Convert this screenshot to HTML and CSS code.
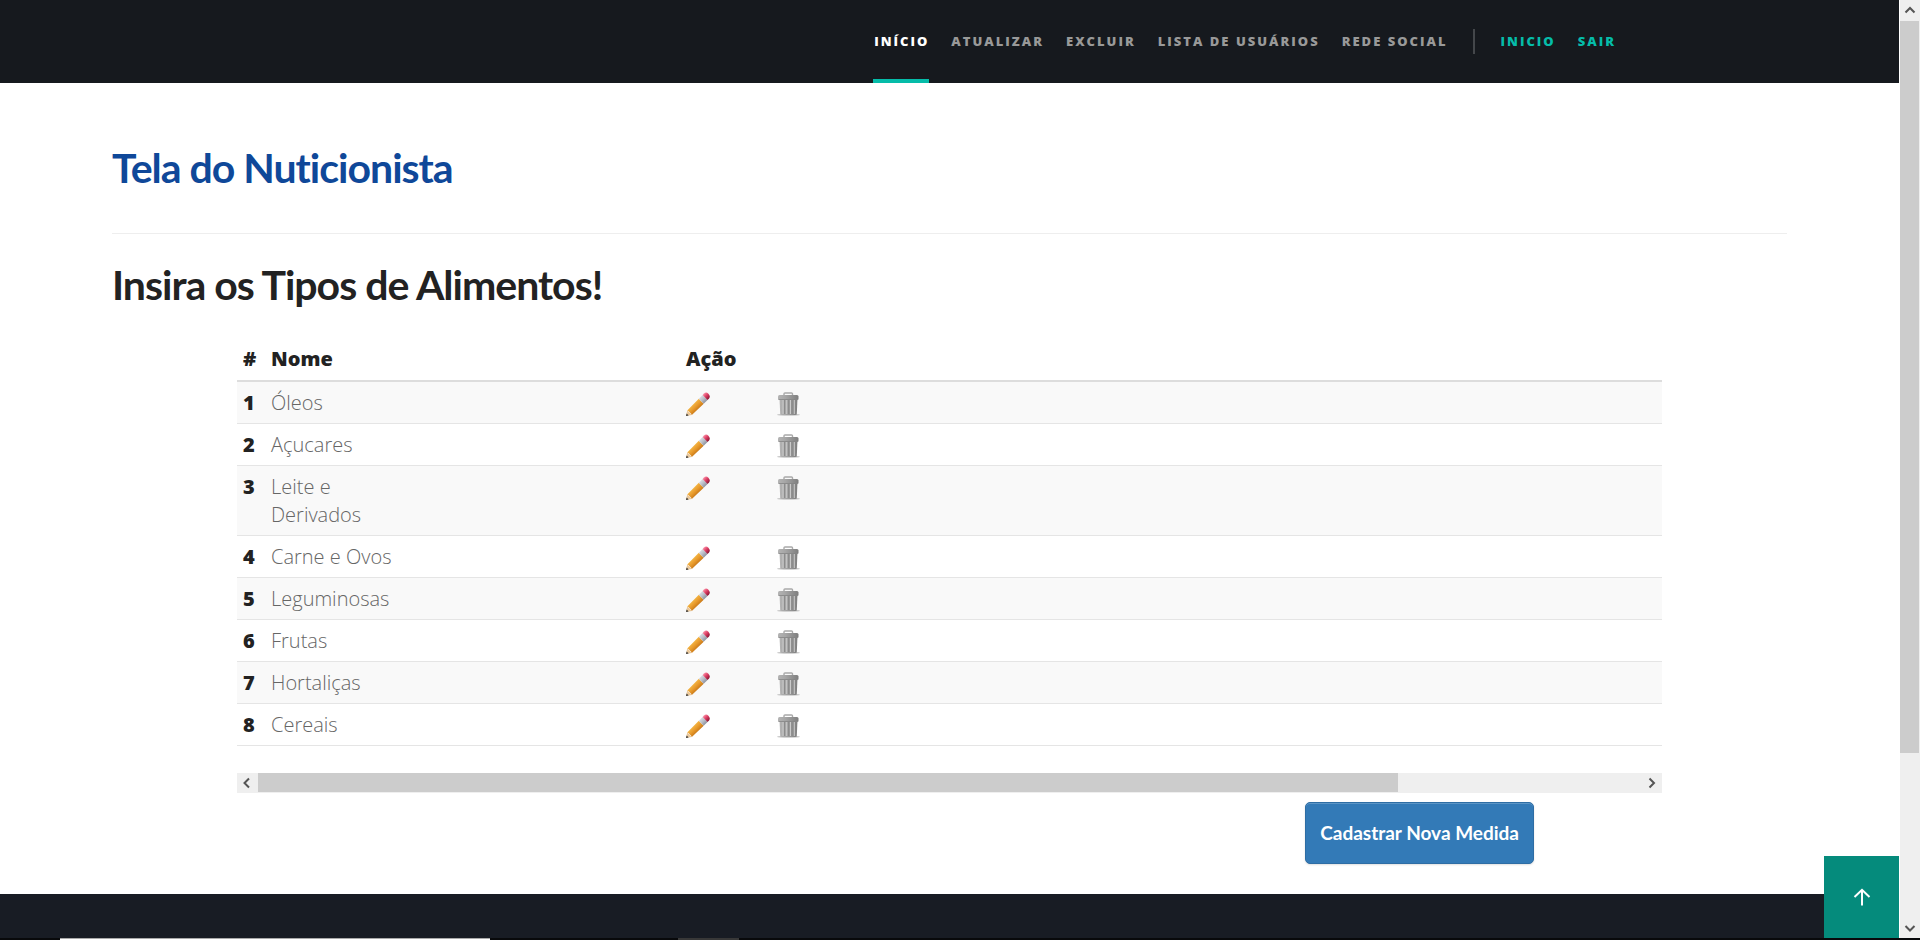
FILE: index.html
```html
<!DOCTYPE html>
<html lang="pt-br">
<head>
<meta charset="utf-8">
<title>Tela do Nuticionista</title>
<link rel="stylesheet" href="styles.css">
</head>
<body>
<svg class="defs" aria-hidden="true">
  <defs>
    <linearGradient id="wood" x1="0" y1="0" x2="1" y2="1"><stop offset="0.3" stop-color="#f6bd4c"/><stop offset="0.5" stop-color="#e89a2c"/><stop offset="0.75" stop-color="#b8670f"/></linearGradient>
    <linearGradient id="rubber" x1="0" y1="0" x2="1" y2="1"><stop offset="0.2" stop-color="#f5809a"/><stop offset="0.5" stop-color="#d93a60"/><stop offset="0.9" stop-color="#7d1230"/></linearGradient>
    <linearGradient id="ferrule" x1="0" y1="0" x2="1" y2="1"><stop offset="0.1" stop-color="#e6e8ec"/><stop offset="0.5" stop-color="#b9bdc6"/><stop offset="1" stop-color="#6d7280"/></linearGradient>
    <linearGradient id="tin" x1="0" y1="0" x2="1" y2="0"><stop offset="0" stop-color="#b4b4b4"/><stop offset="0.35" stop-color="#a6a6a6"/><stop offset="1" stop-color="#7e7e7e"/></linearGradient>
    <symbol id="pencil" viewBox="0 0 24 24">
      <path d="M0 24 1.200 18.500 5.800 23Z" fill="#e9c79a"/>
      <path d="M0 24 .6 21.500 2.600 23.500Z" fill="#333"/>
      <path d="M1.200 18.500 12.800 6.800 17.700 11.700 5.800 23Q5.200 21.300 3.800 20.500 2.900 18.800 1.200 18.500Z" fill="url(#wood)"/>
      <path d="M12.800 6.800 16.600 3 21.500 7.900 17.700 11.700Z" fill="url(#ferrule)"/>
      <path d="M16.600 3 18 1.600Q20-.4 22.400 1.700 24.800 4.400 23 6.400L21.500 7.900Z" fill="url(#rubber)"/>
    </symbol>
    <symbol id="trash" viewBox="0 0 24 24">
      <ellipse cx="11.500" cy="22.700" rx="11.500" ry="1" fill="#c6c6c6"/>
      <path d="M7 3.500V1.800Q7 1 8 1H14.500Q15.500 1 15.500 1.800V3.500" fill="none" stroke="#a9a9a9" stroke-width="1.400"/>
      <path d="M2.500 6H20.500L19.800 22Q19.700 23 18.500 23H4.500Q3.300 23 3.200 22Z" fill="url(#tin)"/>
      <path d="M6 8V22M9.700 8V22M13.500 8V22M17.300 8V22" stroke="#cacaca" stroke-width="1"/>
      <path d="M7.500 8V22M11.500 8V22M15.200 8V22" stroke="#8c8c8c" stroke-width="1"/>
      <path d="M1 4.500Q1 3 2.500 3H20Q21.500 3 21.500 4.500V7.500H1Z" fill="url(#tin)"/>
      <path d="M1.500 7.500H21" stroke="#858585" stroke-width=".8"/>
    </symbol>
  </defs>
</svg>

<div class="page">
  <header class="topbar">
    <nav class="menu">
      <a class="menu-link active" href="#inicio">INÍCIO</a>
      <a class="menu-link" href="#atualizar">ATUALIZAR</a>
      <a class="menu-link" href="#excluir">EXCLUIR</a>
      <a class="menu-link" href="#usuarios">LISTA DE USUÁRIOS</a>
      <a class="menu-link" href="#rede">REDE SOCIAL</a>
      <span class="menu-divider"></span>
      <a class="menu-link accent" href="#home">INICIO</a>
      <a class="menu-link accent" href="#sair">SAIR</a>
    </nav>
  </header>

  <main class="content">
    <h1 class="title title-blue">Tela do Nuticionista</h1>
    <hr class="rule">
    <h2 class="title">Insira os Tipos de Alimentos!</h2>

    <section class="listing">
      <table class="foods">
        <thead>
          <tr><th class="col-id" scope="col">#</th><th class="col-name" scope="col">Nome</th><th class="col-edit" scope="col">Ação</th><th></th></tr>
        </thead>
        <tbody>
          <tr><th scope="row">1</th><td class="name">Óleos</td><td><a class="action" href="#e1" aria-label="Editar"><svg><use href="#pencil"/></svg></a></td><td><a class="action" href="#x1" aria-label="Excluir"><svg><use href="#trash"/></svg></a></td></tr>
          <tr><th scope="row">2</th><td class="name">Açucares</td><td><a class="action" href="#e2" aria-label="Editar"><svg><use href="#pencil"/></svg></a></td><td><a class="action" href="#x2" aria-label="Excluir"><svg><use href="#trash"/></svg></a></td></tr>
          <tr><th scope="row">3</th><td class="name">Leite e Derivados</td><td><a class="action" href="#e3" aria-label="Editar"><svg><use href="#pencil"/></svg></a></td><td><a class="action" href="#x3" aria-label="Excluir"><svg><use href="#trash"/></svg></a></td></tr>
          <tr><th scope="row">4</th><td class="name">Carne e Ovos</td><td><a class="action" href="#e4" aria-label="Editar"><svg><use href="#pencil"/></svg></a></td><td><a class="action" href="#x4" aria-label="Excluir"><svg><use href="#trash"/></svg></a></td></tr>
          <tr><th scope="row">5</th><td class="name">Leguminosas</td><td><a class="action" href="#e5" aria-label="Editar"><svg><use href="#pencil"/></svg></a></td><td><a class="action" href="#x5" aria-label="Excluir"><svg><use href="#trash"/></svg></a></td></tr>
          <tr><th scope="row">6</th><td class="name">Frutas</td><td><a class="action" href="#e6" aria-label="Editar"><svg><use href="#pencil"/></svg></a></td><td><a class="action" href="#x6" aria-label="Excluir"><svg><use href="#trash"/></svg></a></td></tr>
          <tr><th scope="row">7</th><td class="name">Hortaliças</td><td><a class="action" href="#e7" aria-label="Editar"><svg><use href="#pencil"/></svg></a></td><td><a class="action" href="#x7" aria-label="Excluir"><svg><use href="#trash"/></svg></a></td></tr>
          <tr><th scope="row">8</th><td class="name">Cereais</td><td><a class="action" href="#e8" aria-label="Editar"><svg><use href="#pencil"/></svg></a></td><td><a class="action" href="#x8" aria-label="Excluir"><svg><use href="#trash"/></svg></a></td></tr>
        </tbody>
      </table>
      <div class="hbar">
        <svg class="arrow" viewBox="0 0 20 20"><path d="M12 5.500 7.500 10 12 14.500"/></svg>
        <div class="hbar-track"><div class="hbar-thumb"></div></div>
        <svg class="arrow" viewBox="0 0 20 20"><path d="M7.500 5.500 12 10 7.500 14.500"/></svg>
      </div>
    </section>
    <div class="actions"><button class="primary" type="button">Cadastrar Nova Medida</button></div>
  </main>

  <footer class="footer"></footer>
  <a class="to-top" href="#inicio" aria-label="Voltar ao topo"><svg viewBox="0 0 18 18"><path d="M9 17.500V2M1.500 9 9 1.800 16.500 9"/></svg></a>
</div>

<div class="vbar">
  <svg class="arrow" viewBox="0 0 20 20"><path d="M5.500 12.500 10 8 14.500 12.500"/></svg>
  <div class="vbar-track"><div class="vbar-thumb"></div></div>
  <svg class="arrow" viewBox="0 0 20 20"><path d="M5.500 8 10 12.500 14.500 8"/></svg>
</div>

<div class="taskbar"><span class="task-search"></span><span class="task-item"></span></div>
</body>
</html>
```
FILE: styles.css
```css
* { box-sizing: border-box; }

body {
  margin: 0;
  min-height: 100vh;
  display: grid;
  grid-template-columns: 1fr 20px;
  grid-template-rows: 1fr 2px;
  column-gap: 1px;
  background: #fff;
  color: #222;
  font-family: "Open Sans", sans-serif;
  font-size: 20px;
  line-height: 28px;
}

.defs { position: absolute; width: 0; height: 0; }

.page {
  position: relative;
  display: flex;
  flex-direction: column;
}

/* Top bar */
.topbar {
  display: flex;
  justify-content: flex-end;
  height: 83px;
  padding-right: 283px;
  background: #16191e;
}
.menu { display: flex; align-items: stretch; gap: 21px; }
.menu-link {
  display: flex;
  align-items: center;
  padding: 3px 0 0 1px;
  border-bottom: 4px solid transparent;
  color: #999;
  font-size: 13px;
  font-weight: 800;
  letter-spacing: 2px;
  text-decoration: none;
  white-space: nowrap;
}
.menu-link.active { color: #fff; border-bottom-color: #05bca9; }
.menu-link.accent { color: #05bca9; }
.menu-divider { align-self: center; width: 2px; height: 25px; margin: 0 4px; background: #44474b; }

/* Content */
.content { padding: 60px 112px 30px; }
.title {
  margin: 0;
  font-family: Lato, "Open Sans", sans-serif;
  font-size: 41px;
  font-weight: 700;
  line-height: 50px;
  letter-spacing: -1px;
}
.title-blue { color: #0f4899; }
.rule { margin: 40px 0 26px; border: 0; border-top: 1px solid #eee; }

.listing { margin: 29px 125px 0; }
.foods { width: 100%; table-layout: fixed; border-collapse: separate; border-spacing: 0; }
.foods th, .foods td {
  padding: 7px 6px 6px;
  border-bottom: 1px solid #e5e5e5;
  text-align: left;
  vertical-align: top;
}
.foods th { font-weight: 800; }
.foods td { color: #666; font-weight: 300; }
.foods thead th { padding: 6px 6px 7px; border-bottom: 2px solid #ddd; }
.foods tbody tr:nth-child(odd) { background: #f9f9f9; }
.foods .col-id { width: 28px; }
.foods .col-name { width: 415px; }
.foods .col-edit { width: 91px; }
.foods .name { padding-right: 269px; }
.action { display: flex; padding-top: 3px; }
.action svg { width: 24px; height: 24px; }

/* Scroll bars */
.arrow { flex: none; width: 20px; height: 20px; fill: none; stroke: #555; stroke-width: 2; }
.hbar { display: flex; gap: 1px; margin-top: 27px; background: #efefef; }
.hbar-track { flex: 1; }
.hbar-thumb { width: 82.400%; height: 19px; background: #ccc; }
.vbar { display: flex; flex-direction: column; gap: 1px; background: #efefef; }
.vbar-track { flex: 1; }
.vbar-thumb { width: 19px; height: 81.700%; background: #ccc; }

.actions { display: flex; justify-content: flex-end; margin-top: 9px; padding-right: 253px; }
.primary {
  height: 62px;
  padding: 0 14px;
  border: 1px solid #2e6da4;
  border-radius: 5px;
  background: #337ab7;
  box-shadow: inset 0 1px 0 #5c95c5, 0 1px 2px #00000020;
  color: #fff;
  font: 700 19px/28px Lato, "Open Sans", sans-serif;
}

.footer { flex: 1; background: #181c24; }
.to-top {
  position: absolute;
  right: 0;
  bottom: 0;
  display: flex;
  align-items: center;
  justify-content: center;
  width: 75px;
  height: 82px;
  background: #058b7c;
}
.to-top svg { width: 18px; height: 18px; fill: none; stroke: #fff; stroke-width: 2; }

.taskbar { grid-column: 1 / -1; display: flex; gap: 188px; padding-left: 60px; background: #08090b; }
.task-search { width: 430px; border-top: 1px solid #aaa; background: #fff; }
.task-item { width: 61px; background: #383838; }
```
